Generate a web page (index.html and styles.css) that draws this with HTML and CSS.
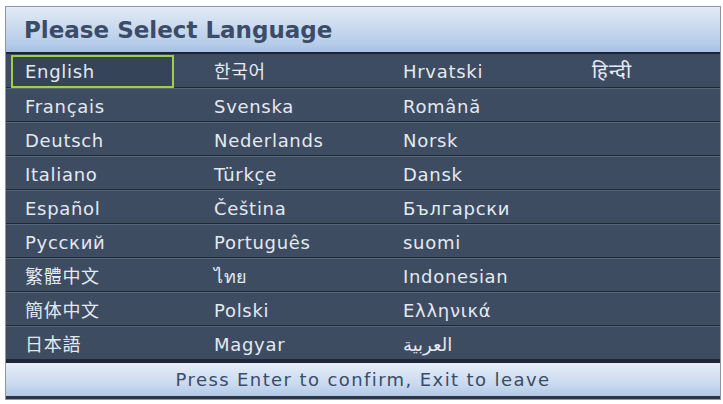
FILE: index.html
```html
<!DOCTYPE html>
<html lang="en">

<head>
    <meta charset="UTF-8">
    <meta name="viewport" content="width=device-width, initial-scale=1.0">
    <title>Language - OSD Menu</title>
    <link rel="stylesheet" href="styles.css">
</head>

<body>
    <div class="osd">
        <div class="osd-header">Please Select Language</div>
        <div class="lang-list">
            <div class="lang-row">
                <div class="cell"><span class="label selected">English</span></div>
                <div class="cell"><span class="label">한국어</span></div>
                <div class="cell"><span class="label">Hrvatski</span></div>
                <div class="cell"><span class="label hindi">हिन्दी</span></div>
            </div>
            <div class="lang-row">
                <div class="cell"><span class="label">Français</span></div>
                <div class="cell"><span class="label">Svenska</span></div>
                <div class="cell"><span class="label">Română</span></div>
                <div class="cell"></div>
            </div>
            <div class="lang-row">
                <div class="cell"><span class="label">Deutsch</span></div>
                <div class="cell"><span class="label">Nederlands</span></div>
                <div class="cell"><span class="label">Norsk</span></div>
                <div class="cell"></div>
            </div>
            <div class="lang-row">
                <div class="cell"><span class="label">Italiano</span></div>
                <div class="cell"><span class="label">Türkçe</span></div>
                <div class="cell"><span class="label">Dansk</span></div>
                <div class="cell"></div>
            </div>
            <div class="lang-row">
                <div class="cell"><span class="label">Español</span></div>
                <div class="cell"><span class="label">Čeština</span></div>
                <div class="cell"><span class="label">Български</span></div>
                <div class="cell"></div>
            </div>
            <div class="lang-row">
                <div class="cell"><span class="label">Русский</span></div>
                <div class="cell"><span class="label">Português</span></div>
                <div class="cell"><span class="label">suomi</span></div>
                <div class="cell"></div>
            </div>
            <div class="lang-row">
                <div class="cell"><span class="label">繁體中文</span></div>
                <div class="cell"><span class="label">ไทย</span></div>
                <div class="cell"><span class="label">Indonesian</span></div>
                <div class="cell"></div>
            </div>
            <div class="lang-row">
                <div class="cell"><span class="label">簡体中文</span></div>
                <div class="cell"><span class="label">Polski</span></div>
                <div class="cell"><span class="label">Ελληνικά</span></div>
                <div class="cell"></div>
            </div>
            <div class="lang-row">
                <div class="cell"><span class="label">日本語</span></div>
                <div class="cell"><span class="label">Magyar</span></div>
                <div class="cell"><span class="label">العربية</span></div>
                <div class="cell"></div>
            </div>
        </div>
        <div class="osd-footer">Press Enter to confirm, Exit to leave</div>
    </div>
</body>

</html>
```

FILE: styles.css
```css
body {
    margin: 0;
    background-color: white;
    font-family: "DejaVu Sans", "Noto Sans CJK SC", sans-serif;
}

.osd {
    width: 714px;
    margin: 6px 0 0 5px;
    border: 1px solid #8b95a5;
    background-color: #3e4c61;
}

.osd-header {
    height: 45px;
    padding-left: 18px;
    display: flex;
    align-items: center;
    font-size: 23px;
    font-weight: bold;
    color: #3b4c69;
    background: linear-gradient(#e2ebf6, #b4cbe8 85%, #a5bfe2);
    border-bottom: 2px solid #1b2436;
}

.lang-row {
    display: grid;
    grid-template-columns: 189px 189px 189px 1fr;
    height: 30px;
    padding: 1px 0;
    border-top: 1px solid #56647a;
    border-bottom: 1px solid #1e2839;
}

.lang-row:first-child {
    border-top: none;
    height: 31px;
}

.cell {
    display: flex;
    align-items: center;
    padding-left: 5px;
}

.label {
    display: block;
    width: 147px;
    padding-left: 12px;
    line-height: 29px;
    font-size: 18px;
    letter-spacing: 0.7px;
    white-space: nowrap;
    color: #e3e9f1;
    border: 2px solid transparent;
}

.label.hindi {
    font-size: 20px;
}

.label.selected {
    border-color: #9fd040;
    background-color: #36445a;
}

.osd-footer {
    height: 33px;
    display: flex;
    align-items: center;
    justify-content: center;
    font-size: 18px;
    letter-spacing: 1.4px;
    color: #3b4c69;
    background: linear-gradient(#e6eef8, #c6d7ee 70%, #b2c8e6);
    border-top: 3px solid #1e2839;
    border-bottom: 3px solid #2a3548;
}
```
